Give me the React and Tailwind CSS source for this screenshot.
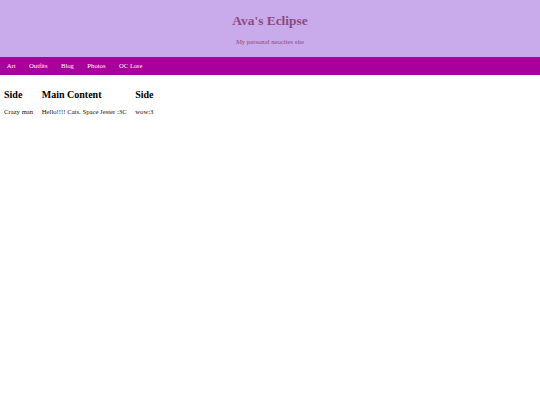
import React from "react";

const links = ["Art", "Outfits", "Blog", "Photos", "OC Lore"];

const columns = [
  { title: "Side", text: "Crazy man" },
  { title: "Main Content", text: "Hello!!!! Cats. Space Jester :3C" },
  { title: "Side", text: "wow:3" },
];

const App = () => {
  return (
    <div className="min-h-[405px] bg-white font-['Liberation_Serif',serif] text-[6.7px] text-black">
      <header className="h-[56.7px] bg-[#c9aaea] text-center text-[#8b4a80] flex flex-col items-center">
        <h1 className="mt-[14px] text-[13.4px] font-bold leading-[14px]">Ava's Eclipse</h1>
        <p className="mt-[10px] leading-[8px]">My personal neocites site</p>
      </header>
      <nav className="h-[18.8px] bg-[#a8009a] flex items-center">
        {links.map((l) => (
          <a key={l} href="#" className="px-[6.7px] text-white leading-[8px]">
            {l}
          </a>
        ))}
      </nav>
      <main className="flex gap-[8.6px] px-[4px] pt-[14px]">
        {columns.map((c, i) => (
          <section key={i}>
            <h2 className="text-[10px] font-bold leading-[11px]">{c.title}</h2>
            <p className="mt-[8px] leading-[8px] text-[#111]">{c.text}</p>
          </section>
        ))}
      </main>
    </div>
  );
};

export default App;
